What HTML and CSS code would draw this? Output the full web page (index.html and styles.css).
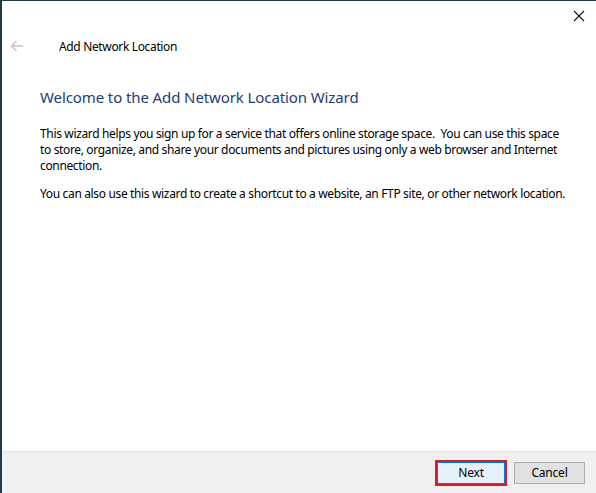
FILE: index.html
```html
<!DOCTYPE html>
<html>
<head>
<meta charset="utf-8">
<link rel="stylesheet" href="styles.css">
</head>
<body>
<div class="window">
  <div class="titlebar">
    <button class="close" aria-label="Close">
      <svg width="12" height="12" viewBox="0 0 12 12"><path d="M1 1L11 11M11 1L1 11" stroke="#111" stroke-width="1.1" fill="none"/></svg>
    </button>
  </div>
  <div class="navrow">
    <span class="back">
      <svg width="14" height="12" viewBox="0 0 14 12"><path d="M13 6H1.5M6.5 1L1.5 6L6.5 11" stroke="#c4c4c4" stroke-width="1.3" fill="none"/></svg>
    </span>
    <span class="wtitle">Add Network Location</span>
  </div>
  <div class="content">
    <h1 class="heading">Welcome to the Add Network Location Wizard</h1>
    <p class="para">This wizard helps you sign up for a service that offers online storage space.&nbsp; You can use this space to store, organize, and share your documents and pictures using only a web browser and Internet connection.</p>
    <p class="para">You can also use this wizard to create a shortcut to a website, an FTP site, or other network location.</p>
  </div>
  <div class="footer">
    <button class="btn btn-next">Next</button>
    <button class="btn btn-cancel">Cancel</button>
  </div>
</div>
</body>
</html>
```

FILE: styles.css
```css
html, body {
  margin: 0;
  padding: 0;
  background: #ffffff;
}
.window {
  width: 594px;
  height: 492px;
  border-left: 2px solid #1d3b45;
  border-top: 1px solid #1d3b45;
  display: flex;
  flex-direction: column;
  background: #ffffff;
  font-family: "Noto Sans", "Open Sans", sans-serif;
  font-size: 12px;
  letter-spacing: -0.35px;
  color: #000;
}
.titlebar {
  height: 30px;
  display: flex;
  justify-content: flex-end;
}
.close {
  width: 34px;
  height: 30px;
  border: 0;
  background: transparent;
  padding: 0;
  display: flex;
  align-items: center;
  justify-content: center;
}
.navrow {
  height: 30px;
  display: flex;
  align-items: center;
}
.back {
  width: 57px;
  padding-left: 8px;
  box-sizing: border-box;
  display: flex;
  align-items: center;
}
.wtitle {
  color: #000;
}
.content {
  flex: 1;
  padding: 26px 30px 0 38px;
}
.heading {
  margin: 0 0 19px 0;
  font-weight: normal;
  font-size: 15px;
  letter-spacing: -0.1px;
  color: #1e3d78;
  line-height: 20px;
}
.para {
  margin: 0 0 12px 0;
  line-height: 16px;
}
.footer {
  height: 41px;
  background: #f0f0f0;
  border-top: 1px solid #dfdfdf;
  display: flex;
  justify-content: flex-end;
  align-items: center;
  gap: 9px;
  padding-right: 11px;
}
.btn {
  font-family: inherit;
  font-size: 12px;
  letter-spacing: -0.2px;
  padding: 0;
  color: #000;
}
.btn-next {
  background: #e5f1fb;
  border: 1px solid #0078d7;
  outline: 2px solid #d0202e;
  outline-offset: 0;
  width: 68px;
  height: 22px;
}
.btn-cancel {
  background: #e1e1e1;
  border: 1px solid #adadad;
  width: 71px;
  height: 22px;
}
```
